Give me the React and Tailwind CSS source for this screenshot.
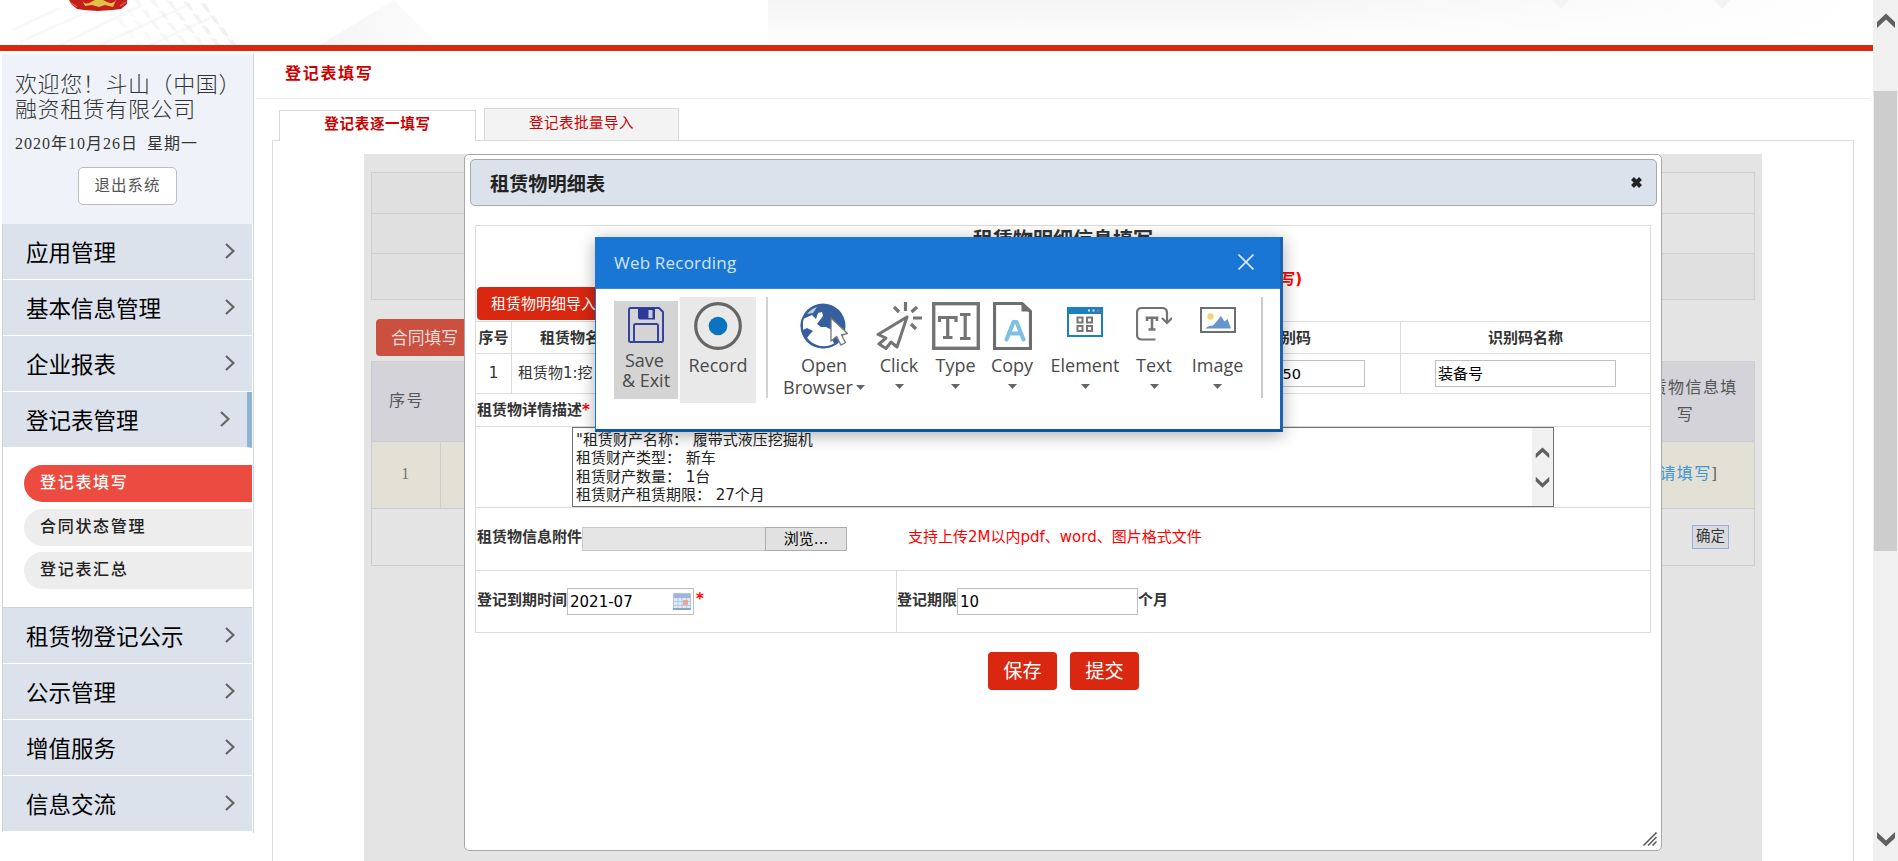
import React from "react";

const SERIF = "font-['Liberation_Serif','Noto_Sans_CJK_SC',serif]";
const SANS = "font-['DejaVu_Sans','Noto_Sans_CJK_SC',sans-serif]";

function Chevron({ dir = "down", size = 20, className = "" }) {
  const d = dir === "down" ? "M1 1 L10 9.5 L19 1 V7 L10 15.5 L1 7 Z" : "M1 15 L10 6.5 L19 15 V9 L10 0.5 L1 9 Z";
  return (
    <svg width={size} height={size * 0.8} viewBox="0 0 20 16" className={className}>
      <path d={d} fill="#606060" />
    </svg>
  );
}

function Header() {
  const bars = [];
  for (let r = 0; r < 5; r++) {
    for (let c = 0; c < 7; c++) {
      const x = 98 + c * 17 + r * 9;
      const y = -6 + r * 12 + c * 1.5;
      bars.push(<path key={r + "-" + c} d={`M${x} ${y} l6 1 l5 9 l-5 -2 Z`} fill="#ececf0" opacity={0.25 + c * 0.08} />);
    }
  }
  return (
    <div className="h-[51px] shrink-0 border-b-[6px] border-[#da2710] bg-white">
      <svg width="1873" height="45" viewBox="0 0 1873 45" className="block">
        <defs>
          <linearGradient id="shade" x1="0" y1="0" x2="0" y2="1">
            <stop offset="0" stopColor="#f5f5f5" />
            <stop offset="1" stopColor="#fefefe" />
          </linearGradient>
          <linearGradient id="fade" x1="0" y1="0" x2="1" y2="0">
            <stop offset="0" stopColor="#fff" stopOpacity="0" />
            <stop offset="1" stopColor="#fff" />
          </linearGradient>
          <linearGradient id="peak" x1="0" y1="0" x2="1" y2="0">
            <stop offset="0" stopColor="#f4f4f4" />
            <stop offset="1" stopColor="#fdfdfd" />
          </linearGradient>
        </defs>
        <rect x="768" width="1105" height="45" fill="url(#shade)" />
        <rect x="1250" width="624" height="45" fill="url(#fade)" />
        <path d="M12 30 L60 8 M20 42 L100 6 M60 45 L140 6 M100 45 L190 4 M150 45 L210 18" stroke="#f8f8f9" strokeWidth="3" />
        {bars}
        <path d="M394 0 L320 45 L440 45 Z" fill="url(#peak)" />
        <path d="M1553 0 h16 l-8 9 Z M1714 0 h16 l-8 9 Z" fill="#f3f3f3" />
        <path d="M69 0 L72 5 L77 9 L84 10 L98 11 L113 10 L121 9 L127 4 V0 Z" fill="#c3201b" />
        <path d="M82 0 q3 6 9 2 l4 -2 h8 l4 2 q6 3 9 -2 l-3 7 -8 -2 -6 2 -7 -2 -7 1 Z" fill="#e3c04a" />
        <path d="M71 3 l6 4 M120 6 l6 -4" stroke="#e8584c" strokeWidth="1.5" />
      </svg>
    </div>
  );
}

function MenuItem({ label, active }) {
  return (
    <div
      className={
        "flex h-14 items-center justify-between border-b border-white bg-[#dce2ec] pl-[23px] " +
        (active ? "border-r-[5px] border-r-[#8db3d7] pr-[17px]" : "pr-[17px]")
      }
    >
      <span className="font-['Noto_Sans_CJK_SC',sans-serif] text-[22.5px] leading-none text-black">{label}</span>
      <svg width="10" height="16" viewBox="0 0 10 16" className="mb-[2px]">
        <path d="M1 1 L8.5 8 L1 15" fill="none" stroke="#666" strokeWidth="2.2" />
      </svg>
    </div>
  );
}

function SubItem({ label, active }) {
  return (
    <div
      className={
        "flex h-[37px] items-center rounded-l-full pb-[5px] pl-4 font-['Noto_Sans_CJK_SC',sans-serif] text-[16px] font-medium leading-none tracking-[1.7px] " +
        (active ? "bg-[#ec4b40] text-white" : "bg-[#ededed] text-[#222]")
      }
    >
      {label}
    </div>
  );
}

function Sidebar() {
  return (
    <div className="ml-[2px] mt-[3px] h-[779px] w-[252px] shrink-0 border-r border-[#d0d8e2] bg-white">
      <div className={"flex h-[170px] flex-col bg-[#eff3f9] pl-[13px] " + SERIF}>
        <div className="mt-[18px] whitespace-nowrap text-[22px] font-light leading-[25px] tracking-[0.6px] text-[#333]">
          欢迎您！斗山（中国）
          <br />
          融资租赁有限公司
        </div>
        <div className="mt-[12px] whitespace-pre text-base leading-5 tracking-[1px] text-[#333] [word-spacing:4px]">2020年10月26日 星期一</div>
        <div className="ml-[63px] mt-[13px] flex h-[38px] w-[99px] items-center justify-center rounded-[5px] border border-[#bdbdbd] bg-white text-[15.5px] leading-none tracking-[1px] text-[#555]">
          退出系统
        </div>
      </div>
      <div className="w-[250px] border-l border-[#d0d0d0]">
        <MenuItem label="应用管理" />
        <MenuItem label="基本信息管理" />
        <MenuItem label="企业报表" />
        <MenuItem label="登记表管理" active />
        <div className="flex h-[160px] flex-col gap-[6.5px] border-b border-[#d0d0d0] pl-[21px] pt-[17px]">
          <SubItem label="登记表填写" active />
          <SubItem label="合同状态管理" />
          <SubItem label="登记表汇总" />
        </div>
        <MenuItem label="租赁物登记公示" />
        <MenuItem label="公示管理" />
        <MenuItem label="增值服务" />
        <MenuItem label="信息交流" />
      </div>
    </div>
  );
}

function Content() {
  return (
    <div className="flex min-w-0 flex-1 flex-col pl-[2px] pr-[3px]">
      <div className={"h-[48px] border-b border-[#ececec] pl-[29px] pt-[15px] text-[16px] font-bold leading-4 tracking-[1.7px] text-[#c00] " + SERIF}>登记表填写</div>
      <div className={"z-10 flex h-[42px] items-end pl-[23px] leading-none text-[#c00] " + SERIF}>
        <div className="mr-[8px] flex h-[31px] w-[197px] items-center justify-center border border-b-0 border-[#d8d8d8] bg-white pb-[3px] text-[14.5px] font-bold tracking-[0.7px]">
          登记表逐一填写
        </div>
        <div className="mb-[1px] flex h-[32px] w-[195px] items-center justify-center self-end border border-b-0 border-[#d8d8d8] bg-[#f3f3f3] pb-[2px] text-[14.5px] tracking-[0.5px]">
          登记表批量导入
        </div>
      </div>
      <div className="ml-[16px] mr-[16px] mt-[-1px] flex-1 border border-b-0 border-[#dcdcdc] pl-[91px] pt-[13px]">
        <div className={"h-[707px] w-[1398px] bg-[#e4e4e4] pl-[7px] pt-[18px] " + SERIF}>
          <div className="w-[1384px] border border-[#cfcfcf]">
            <div className="flex h-[41px] border-b border-[#cfcfcf]"><div className="w-[400px] bg-[#e0e0e0]" /></div>
            <div className="flex h-[40px] border-b border-[#cfcfcf]"><div className="w-[400px] bg-[#e0e0e0]" /></div>
            <div className="h-[45px] bg-[#e0e0e0]" />
          </div>
          <div className="ml-[5px] mt-[19px] flex h-[37px] w-[110px] items-center rounded-[4px] bg-[#cc5040] pl-[15px] font-['Noto_Sans_CJK_SC',sans-serif] text-[16.8px] leading-none text-[#e4dedc]">
            合同填写
          </div>
          <div className="mt-[5px] w-[1384px] border border-[#cdcdcf] text-[16px] tracking-[1.4px] text-[#555]">
            <div className="flex h-[80px] justify-between border-b border-[#cdcdcf] bg-[#d3d3d9] pb-[2px]">
              <div className="flex w-[69px] items-center justify-center">序号</div>
              <div className="flex w-[137px] items-center justify-center whitespace-nowrap text-center leading-[27px]">
                <span>租赁物信息填<br />写</span>
              </div>
            </div>
            <div className="flex h-[67px] justify-between border-b border-[#cdcdcf] bg-[#e3e1d6]">
              <div className="flex w-[69px] items-center justify-center border-r border-[#cdcdcf] pb-[2px] text-[#777]">1</div>
              <div className="flex w-[137px] items-center justify-center pb-[2px]">[<span className="text-[#4295d1]">请填写</span>]</div>
            </div>
            <div className="flex h-[56px] items-center justify-end pr-[25px]">
              <div className="flex h-[24px] w-[37px] items-center justify-center border border-[#97addd] bg-[#dadadd] pb-[1px] text-[14.5px] leading-none tracking-normal text-[#333]">
                确定
              </div>
            </div>
          </div>
        </div>
      </div>
    </div>
  );
}

function Field({ className, children }) {
  return <div className={"flex h-[27px] shrink-0 items-center border border-[#c0c0c0] bg-white pl-[2px] pt-[2px] leading-none text-black " + className}>{children}</div>;
}

const ROW = "flex items-center border-b border-[#dcdcdc] ";

function Modal() {
  return (
    <div className={"absolute left-[464px] top-[154px] flex h-[697px] w-[1198px] flex-col rounded-[5px] border border-[#a9a9a9] bg-white pl-[5px] text-[15px] leading-none text-[#333] " + SANS}>
      <div className="mt-[4px] flex h-[47px] w-[1187px] shrink-0 items-center justify-between rounded-[5px] border border-[#a9a9a9] bg-[#dce2ec] pl-[19px] pr-[13px]">
        <span className="pt-[4px] text-[19.2px] font-bold text-[#222]">租赁物明细表</span>
        <svg width="13" height="13" viewBox="0 0 13 13">
          <path d="M2.5 2.5 L10.5 10.5 M10.5 2.5 L2.5 10.5" stroke="#222" strokeWidth="4" />
        </svg>
      </div>
      <div className="ml-[5px] mt-[19px] w-[1176px] shrink-0 border border-b-0 border-[#dcdcdc]">
        <div className="flex h-[96px] flex-col border-b border-[#dcdcdc]">
          <div className="flex h-[22px] items-center justify-center pt-[6px] text-[20px] font-bold">租赁物明细信息填写</div>
          <div className="flex h-[39px] items-center justify-end pr-[348px] pt-[24px] font-bold text-[red]">写)</div>
          <div className="ml-[1px] flex h-[33px] w-[134px] items-center rounded-[4px] bg-[#da2710] pl-[14px] pt-[1px] text-white">租赁物明细导入</div>
        </div>
        <div className={ROW + "h-[32px] pt-[1px] font-bold"}>
          <div className="-mt-px flex h-[32px] w-[36px] items-center justify-center border-r border-[#dcdcdc] pt-[1px]">序号</div>
          <div className="flex-1 pl-[28px]">租赁物名称</div>
          <div className="-mt-px flex h-[32px] w-[253px] items-center justify-center border-r border-[#dcdcdc] pl-[29px] pt-[1px]">识别码</div>
          <div className="flex w-[249px] items-center justify-center">识别码名称</div>
        </div>
        <div className={ROW + "h-[40px]"}>
          <div className="flex h-full w-[36px] items-center justify-center border-r border-[#dcdcdc]">1</div>
          <div className="flex-1 pl-[6px]">租赁物1:挖</div>
          <div className="flex h-full w-[253px] items-center justify-center border-r border-[#dcdcdc]">
            <Field className="w-[181px] pl-[98px] text-[14.5px]">50</Field>
          </div>
          <div className="flex w-[249px] items-center justify-center">
            <Field className="w-[181px]">装备号</Field>
          </div>
        </div>
        <div className={ROW + "h-[33px] pl-[1px] pt-[1px] font-bold"}>
          租赁物详情描述<span className="text-[red]">*</span>
        </div>
        <div className={ROW + "h-[81px] pl-[96px]"}>
          <div className="flex h-[80px] w-[982px] border border-[#707070]">
            <div className="flex-1 whitespace-pre pl-[3px] pt-[3px] leading-[18.4px] text-[#222]">
              {'"租赁财产名称： 履带式液压挖掘机\n租赁财产类型： 新车\n租赁财产数量： 1台\n租赁财产租赁期限： 27个月'}
            </div>
            <div className="flex w-[21px] flex-col items-center justify-center gap-[17px] bg-[#f0f0f0]">
              <Chevron dir="up" size={15} />
              <Chevron size={15} />
            </div>
          </div>
        </div>
        <div className={ROW + "h-[63px] pl-[1px]"}>
          <span className="pb-[3px] font-bold">租赁物信息附件</span>
          <div className="h-[24px] w-[183px] border border-r-0 border-[#c8c8c8] bg-[#e5e5e5]" />
          <div className="flex h-[24px] w-[82px] items-center justify-center border border-[#adadad] bg-[#e1e1e1] pt-[1px] text-black">浏览...</div>
          <span className="ml-[61px] pb-[3px] text-[red]">支持上传2M以内pdf、word、图片格式文件</span>
        </div>
        <div className={ROW + "h-[62px] pl-[1px] font-bold"}>
          <span className="pb-[3px]">登记到期时间</span>
          <Field className="w-[127px] justify-between pr-[2px] font-normal">
            <span>2021-07</span>
            <svg width="18" height="17" viewBox="0 0 18 17" className="mb-[2px]">
              <rect x="0.5" y="0.5" width="17" height="16" fill="#dfeaf7" stroke="#b4c6df" />
              <rect x="1" y="1" width="16" height="4" fill="#9db5da" />
              <path d="M1 8.5 H17 M1 12.5 H17 M5 5 V16 M9 5 V16 M13.5 5 V16" stroke="#b7cbe5" />
              <rect x="10" y="7" width="5" height="5" fill="#f0a58e" />
              <path d="M0 16 H18" stroke="#8aa5c9" strokeWidth="2" />
            </svg>
          </Field>
          <span className="w-[202px] pb-[4px] pl-[2px] text-[red]">*</span>
          <div className="flex h-full items-center border-l border-[#dcdcdc]">
            <span className="pb-[3px]">登记期限</span>
            <Field className="w-[181px] font-normal">10</Field>
            <span className="pb-[3px]">个月</span>
          </div>
        </div>
      </div>
      <div className="ml-[518px] mt-[19px] flex gap-[13px] text-[19.2px] text-white">
        <div className="flex h-[38px] w-[69px] items-center justify-center rounded-[4px] bg-[#da2710] pt-[1px]">保存</div>
        <div className="flex h-[38px] w-[69px] items-center justify-center rounded-[4px] bg-[#da2710] pt-[1px]">提交</div>
      </div>
      <svg width="14" height="14" viewBox="0 0 14 14" className="mb-[4px] mr-[4px] mt-auto self-end">
        <path d="M0.5 13.5 L13.5 0.5 M5 13.5 L13.5 5 M9.5 13.5 L13.5 9.5" stroke="#555" strokeWidth="1.5" />
      </svg>
    </div>
  );
}

function Tool({ label, width, children }) {
  return (
    <div className={"flex shrink-0 flex-col items-center pt-[14px] " + width}>
      <div className="flex h-[49px] items-start justify-center">{children}</div>
      <div className="mt-[4px] whitespace-nowrap leading-[20px]">{label}</div>
      <Caret className="mt-[9px]" />
    </div>
  );
}

function Caret({ className = "" }) {
  return (
    <svg width="9" height="5" viewBox="0 0 9 5" className={className}>
      <path d="M0 0 H9 L4.5 5 Z" fill="#666" />
    </svg>
  );
}

function RecorderWindow() {
  return (
    <div className="absolute left-[595px] top-[237px] flex h-[195px] w-[688px] flex-col border-b-[3px] border-l border-r-[3px] border-[#0f569f] border-l-[#1a76d4] border-r-[#1863b4] bg-white font-['Open_Sans',sans-serif] shadow-[0_3px_16px_rgba(0,0,0,0.33)]">
      <div className="flex h-[52px] shrink-0 items-center justify-between border-b border-[#3e86cf] bg-[#1a76d4] pl-[18px] pr-[26px]">
        <span className="text-[17px] tracking-[0.2px] text-[#d3e4f7]">Web Recording</span>
        <svg width="16" height="16" viewBox="0 0 16 16" className="mb-[2px]">
          <path d="M0.5 0.5 L15.5 15.5 M15.5 0.5 L0.5 15.5" stroke="#d8e8fa" strokeWidth="1.7" />
        </svg>
      </div>
      <div className="-mt-px flex text-[18px] leading-[20px] text-[#4a4a4a]">
        <div className="ml-[18px] mt-[13px] flex h-[98px] w-[64px] flex-col items-center bg-[#d4d4d4] pt-[6px] text-center">
          <svg width="36" height="36" viewBox="0 0 36 36">
            <path d="M1 2.5 Q1 1 2.5 1 H31 L35 5 V33.5 Q35 35 33.5 35 H2.5 Q1 35 1 33.5 Z" fill="none" stroke="#33439e" strokeWidth="2" />
            <path d="M10 1 H27 V12.5 H12 Q10 12.5 10 10.5 Z" fill="#2c3a97" />
            <rect x="20.5" y="3" width="4" height="8" fill="#c9cce0" />
            <path d="M6 35 V18.5 Q6 17 7.5 17 H28.5 Q30 17 30 18.5 V35" fill="none" stroke="#33439e" strokeWidth="2" />
          </svg>
          <div className="mr-[3px] mt-[7px] whitespace-nowrap">Save</div>
          <div className="whitespace-nowrap">&amp; Exit</div>
        </div>
        <div className="ml-[2px] mt-[9px] flex h-[106px] w-[76px] flex-col items-center bg-[#e9e9e9] pt-[5px]">
          <svg width="48" height="48" viewBox="0 0 48 48">
            <circle cx="24" cy="24" r="22.3" fill="none" stroke="#666" strokeWidth="3.2" />
            <circle cx="24" cy="24" r="9.3" fill="#0a74c0" />
          </svg>
          <div className="mt-[5px]">Record</div>
        </div>
        <div className="ml-[10px] mt-[9px] h-[101px] w-[2px] bg-[#d3d3d3]" />
        <div className="ml-[15px] flex w-[85px] flex-col pt-[14px]">
          <svg width="48" height="48" viewBox="0 0 48 48" className="ml-[17px]">
            <circle cx="23" cy="24" r="22.5" fill="#355f9f" />
            <path d="M3 17 L12 13 L14 15 L16 17 L18 11 L22 10 L23 14 L20 18 L17 22 L21 25 L26 25 L32 28 L31 36 L35 43 Q23 48 12 42 L7 36 L10 32 L13 29 L7 26 L3 28 Z" fill="#fff" />
            <path d="M7 12 Q11 7 17 5 L13 11 Z" fill="#fff" opacity="0.7" />
            <path d="M3 16 A22 22 0 0 0 38 40" fill="none" stroke="#355f9f" strokeWidth="2" />
            <path d="M31 16 V39 L36.5 34.5 L41 43 L45.5 40.5 L41.5 33 L47.5 31.5 Z" fill="#fff" stroke="#777" strokeWidth="1.3" />
          </svg>
          <div className="ml-[16px] mt-[5px] w-[50px] text-center">Open</div>
          <div className="mt-[2px] flex items-center gap-[3px]">
            <span>Browser</span>
            <Caret className="mt-[1px] shrink-0" />
          </div>
        </div>
        <Tool label="Click" width="w-[62px]">
          <svg width="46" height="48" viewBox="0 0 46 48" fill="none" stroke="#747474">
            <path d="M31 15 L2 32.5 L10 36 L3 42 L10 46.5 L15 40 L21 45 Z" strokeWidth="3" strokeLinejoin="round" />
            <path d="M18 5 L23 10 M29.5 0 V9 M41 5 L35.5 10 M37 16 H46 M35 22 L40 27" strokeWidth="3.2" />
          </svg>
        </Tool>
        <Tool label="Type" width="w-[51px]">
          <svg width="48" height="48" viewBox="0 0 48 48" fill="none" stroke="#747474">
            <rect x="1.7" y="1.7" width="44.6" height="44.6" strokeWidth="3.4" />
            <path d="M7.5 20 V15.5 H24 V20 M15.7 15 V35 M11 35.5 H20.5 M28 12.5 H38.5 M28 36.5 H38.5 M33.2 12 V37" strokeWidth="3.2" />
          </svg>
        </Tool>
        <Tool label="Copy" width="w-[62px]">
          <svg width="39" height="48" viewBox="0 0 39 48" fill="none">
            <path d="M1.5 1.5 H29 L37.5 9.5 V46.5 H1.5 Z" stroke="#6e6e6e" strokeWidth="3.2" />
            <path d="M28.5 1 L38 9.5 H28.5 Z" fill="#6e6e6e" />
            <path d="M13.5 37.5 L20.5 20 H23.5 L30.5 37.5 M16.5 31.5 H27.5" stroke="#7cc0e4" strokeWidth="4" strokeLinecap="round" strokeLinejoin="round" />
          </svg>
        </Tool>
        <Tool label="Element" width="w-[84px]">
          <svg width="36" height="30" viewBox="0 0 36 30" fill="none" className="mt-[5px]">
            <rect x="1" y="1" width="34" height="28" fill="#fff" stroke="#1b80bd" strokeWidth="2" />
            <rect width="36" height="7" fill="#1b80bd" />
            <path d="M21 3.5 h2 M25.5 3.5 h2" stroke="#cfe6f5" strokeWidth="2" />
            <path d="M30 3.5 h2" stroke="#ef5a6a" strokeWidth="2" />
            <path d="M10.5 10.5 h5 v5 h-5 Z M20 10.5 h5 v5 h-5 Z M10.5 19 h5 v5 h-5 Z M20 19 h5 v5 h-5 Z" stroke="#777" strokeWidth="2" />
          </svg>
        </Tool>
        <Tool label="Text" width="w-[54px]">
          <svg width="36" height="34" viewBox="0 0 36 34" fill="none" stroke="#747474" className="mt-[5px]">
            <path d="M19.5 32.5 H6 Q1 32.5 1 27.5 V6 Q1 1 6 1 H26 Q31 1 31 6 V15 M26 11 L31 16 L36 11" strokeWidth="2.2" />
            <path d="M11 14 V10.8 H21 V14 M16 10.5 V22 M12.5 22.5 H19.5" strokeWidth="2.6" />
          </svg>
        </Tool>
        <Tool label="Image" width="w-[73px]">
          <svg width="36" height="26" viewBox="0 0 36 26" className="mt-[5px]">
            <rect x="1" y="1" width="34" height="24" fill="#fff" stroke="#6e6e6e" strokeWidth="2" />
            <circle cx="10.5" cy="9.5" r="3.2" fill="#f2d570" />
            <path d="M5 21.5 L9 19 L13 18.5 L17 14 L21 9 L24.5 14.5 L27.5 12 L31 21.5 Z" fill="#6694cf" />
          </svg>
        </Tool>
        <div className="ml-[7px] mt-[9px] h-[101px] w-[2px] shrink-0 bg-[#cacaca]" />
      </div>
    </div>
  );
}

export default function App() {
  return (
    <div className="relative flex h-[861px] w-[1898px] overflow-hidden bg-white">
      <div className="flex w-[1873px] flex-col">
        <Header />
        <div className="flex min-h-0 flex-1">
          <Sidebar />
          <Content />
        </div>
      </div>
      <div className="flex w-[25px] flex-col items-center bg-[#f0f0f0] pl-[1px] pr-[1px]">
        <Chevron dir="up" size={20} className="mt-[13px]" />
        <div className="mt-[62px] h-[460px] w-full bg-[#cdcdcd]" />
        <Chevron size={20} className="mb-[14px] mt-auto" />
      </div>
      <Modal />
      <RecorderWindow />
    </div>
  );
}
